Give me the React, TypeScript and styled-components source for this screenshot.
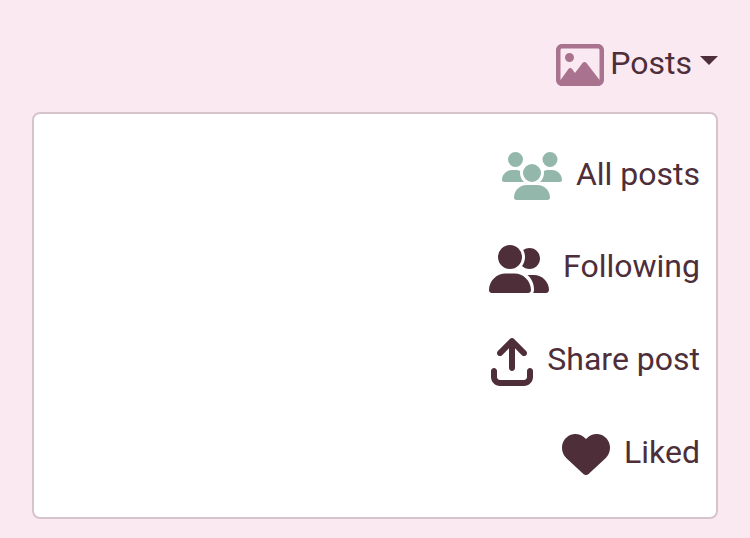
import React from "react";
import styled, { createGlobalStyle } from "styled-components";
import {
  FaArrowUpFromBracket,
  FaHeart,
  FaRegImage,
  FaUserGroup,
  FaUsers,
} from "react-icons/fa6";

const ink = "#4e2e39";
const mauve = "#a9738f";
const sage = "#93b8ab";

const GlobalStyle = createGlobalStyle`
  *, *::before, *::after { box-sizing: border-box; }
  body {
    margin: 0;
    background: #fae9f1;
    color: ${ink};
    font-family: Roboto, sans-serif;
    font-size: 32px;
    line-height: 48px;
  }
`;

const Page = styled.main`
  display: flex;
  flex-direction: column;
  height: 538px;
  padding: 39px 32px 19px;
`;

const Toggle = styled.div`
  display: flex;
  align-items: flex-start;
  justify-content: flex-end;
  height: 73px;
`;

const Icon = styled.span<{
  $tone?: string;
  $width: number;
  $gap: number;
  $drop: number;
}>`
  flex: none;
  margin: ${({ $drop }) => $drop}px ${({ $gap }) => $gap}px 0 0;
  color: ${({ $tone }) => $tone ?? ink};

  svg {
    display: block;
    width: ${({ $width }) => $width}px;
    height: 48px;
  }
`;

const Caret = styled.span`
  margin: 17px 0 0 8px;
  border-top: 9px solid ${ink};
  border-right: 9px solid transparent;
  border-left: 9px solid transparent;
`;

const Menu = styled.ul`
  display: flex;
  flex: 1;
  flex-direction: column;
  gap: 44.67px;
  margin: 0;
  padding: 35.67px 16px 0;
  list-style: none;
  background: #fff;
  border: 2px solid #d6c4cd;
  border-radius: 8px;
`;

const MenuItem = styled.li`
  display: flex;
  align-items: flex-start;
  justify-content: flex-end;
  height: 48px;
`;

const items = [
  { label: "All posts", Glyph: FaUsers, width: 60, tone: sage },
  { label: "Following", Glyph: FaUserGroup, width: 60 },
  { label: "Share post", Glyph: FaArrowUpFromBracket, width: 42 },
  { label: "Liked", Glyph: FaHeart, width: 48 },
];

export default function App() {
  return (
    <>
      <GlobalStyle />
      <Page>
        <Toggle>
          <Icon $tone={mauve} $width={48} $gap={6} $drop={2}>
            <FaRegImage />
          </Icon>
          <span>Posts</span>
          <Caret />
        </Toggle>
        <Menu>
          {items.map(({ label, Glyph, width, tone }) => (
            <MenuItem key={label}>
              <Icon $tone={tone} $width={width} $gap={14} $drop={2.67}>
                <Glyph />
              </Icon>
              <span>{label}</span>
            </MenuItem>
          ))}
        </Menu>
      </Page>
    </>
  );
}
